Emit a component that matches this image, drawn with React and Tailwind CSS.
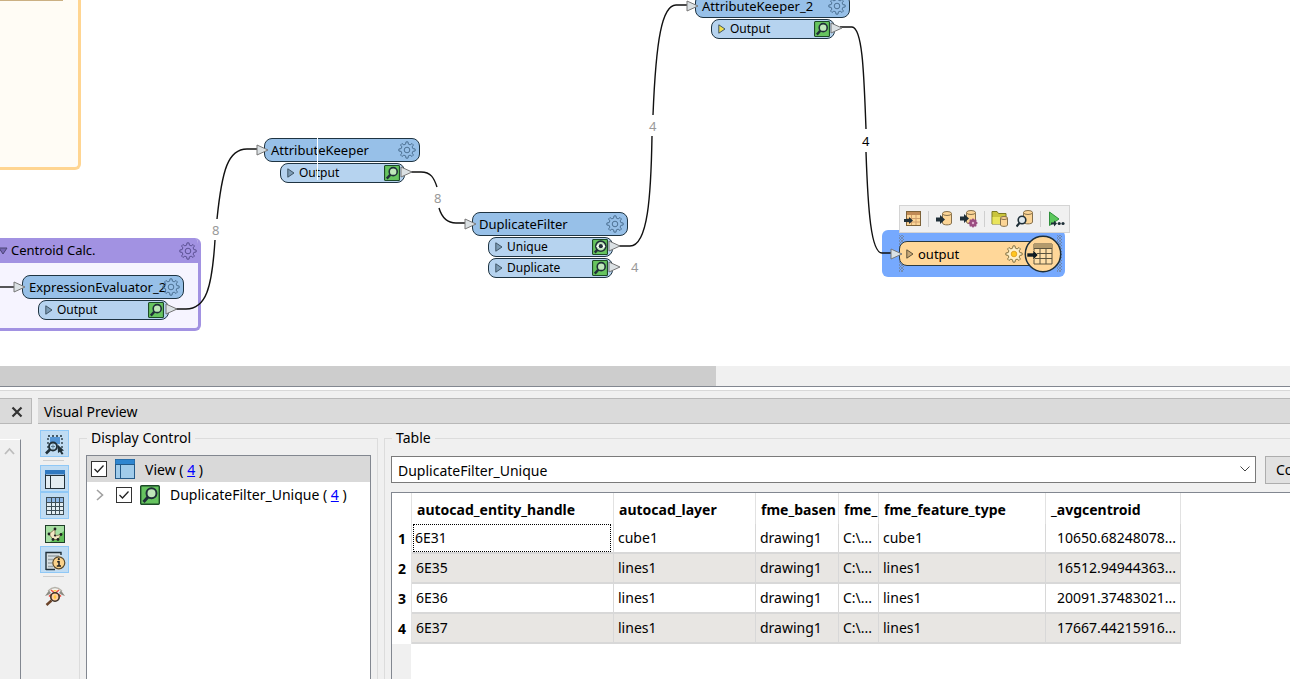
import React, { useState } from 'react';

const INK = '#1f2f38';

const gearPath = (c, outer, inner, teeth = 8) => {
  const step = (Math.PI * 2) / teeth;
  const pt = (a, r) => `${(c + r * Math.cos(a)).toFixed(2)} ${(c + r * Math.sin(a)).toFixed(2)}`;
  let d = '';
  for (let i = 0; i < teeth; i++) {
    const a = i * step - Math.PI / 2;
    d += `${i === 0 ? 'M' : 'L'}${pt(a - step * 0.3, inner)} L${pt(a - step * 0.16, outer)} L${pt(a + step * 0.16, outer)} L${pt(a + step * 0.3, inner)} `;
  }
  return d + 'Z';
};

const Gear = ({ fill = 'none', stroke = '#45698a', dot = 'none' }) => (
  <svg width="18" height="18" viewBox="0 0 18 18" className="shrink-0">
    <path d={gearPath(9, 8.2, 6)} fill={fill} stroke={stroke} strokeWidth="0.9" strokeLinejoin="round" />
    <circle cx="9" cy="9" r="2.8" fill={dot} stroke={dot === 'none' ? stroke : '#e0a020'} strokeWidth="0.9" />
  </svg>
);

const Inspect = ({ eye, className = 'size-4' }) => (
  <svg viewBox="0 0 20 20" className={`shrink-0 ${className}`}>
    <rect x="0.7" y="0.7" width="18.6" height="18.6" rx="1" fill="#66c45f" stroke="#1c4a28" strokeWidth="1.4" />
    <path d="M3.5 17 L8 12" stroke={INK} strokeWidth="3" />
    {eye ? (
      <>
        <circle cx="11" cy="9" r="6.3" fill="#bfe8ba" stroke={INK} strokeWidth="2" />
        <path d="M5 9 Q11 3.5 17 9 Q11 14.5 5 9Z" fill="#fff" />
        <circle cx="11" cy="9" r="2.6" fill={INK} />
      </>
    ) : (
      <circle cx="11.5" cy="8.3" r="5" fill="#bfe8ba" stroke={INK} strokeWidth="2" />
    )}
  </svg>
);

const Expand = ({ fill = '#7d9cb5', stroke = '#3f5566' }) => (
  <svg width="8" height="10" viewBox="0 0 8 10" className="shrink-0">
    <path d="M0.8 0.8 L7 5 L0.8 9.2Z" fill={fill} stroke={stroke} />
  </svg>
);

const Port = ({ label, eye, arrow }) => (
  <div className="flex h-5 items-center rounded-lg border border-[#1f3442] bg-[#b6d3ef] pr-1 pl-[6px]">
    <Expand fill={arrow} />
    <span className="ml-1 flex-1 text-xs leading-4">{label}</span>
    <Inspect eye={eye} />
  </div>
);

const Transformer = ({ name, ports, className }) => (
  <div className={`absolute ${className}`}>
    <div className="flex h-6 items-center justify-between rounded-lg border border-[#1f3442] bg-[#97c0e8] pr-[3px] pl-[6px]">
      <span className="w-0 text-[13px] leading-none whitespace-nowrap">{name}</span>
      <Gear />
    </div>
    <div className="mr-[15px] ml-4 flex flex-col gap-px pt-px">
      {ports.map((port) => (
        <Port key={port.label} {...port} />
      ))}
    </div>
  </div>
);

const wires = [
  'M0 287 H15',
  'M175 309 H186 C206 309 212 288 215 240',
  'M217 219 C222 170 228 149 247 149 H257',
  'M411 172 H421 C431 172 434 178 437 187',
  'M439 208 C442 218 447 223 456 223 H466',
  'M619 246 H630 C648 246 651 195 652 136',
  'M653 115 C656 40 662 5 676 5 H688',
  'M840 27 H852 C863 28 864 78 866 129',
  'M866 152 C868 210 871 253 882 253 H892',
];

const arrows = [
  [14, 287], [166, 309], [257, 150], [401, 172], [465, 224],
  [609, 246], [609, 267], [687, 6], [831, 28],
];

const counts = [
  { n: 8, className: 'left-[212px] top-[221px] text-[#999]' },
  { n: 8, className: 'left-[434px] top-[189px] text-[#999]' },
  { n: 4, className: 'left-[649px] top-[117px] text-[#999]' },
  { n: 4, className: 'left-[631px] top-[258px] text-[#999]' },
  { n: 4, className: 'left-[862px] top-[132px] text-black' },
];

const Drum = ({ x = 0, y = 0 }) => (
  <g transform={`translate(${x} ${y})`} fill="#fcd596" stroke="#85704c">
    <path d="M0.5 2.5 V12 C0.5 14.5 9.5 14.5 9.5 12 V2.5" />
    <ellipse cx="5" cy="2.5" rx="4.5" ry="2" />
  </g>
);

const BlackArrow = ({ x = 0, y = 0 }) => (
  <path transform={`translate(${x} ${y})`} d="M0 2.5 H5 V0 L10 4.5 L5 9 V6.5 H0Z" fill={INK} />
);

const ToolIcon = ({ label, children }) => (
  <button type="button" aria-label={label} className="shrink-0">
    <svg width="18" height="18" viewBox="0 0 18 18">{children}</svg>
  </button>
);

const ToolDivider = () => <span className="h-4 w-px bg-[#cfcfcf]" />;

const MiniToolbar = () => (
  <div className="absolute top-[205px] left-[899px] flex h-7 w-[171px] items-center justify-between border border-[#d4d4d4] bg-[#f0f0f0] px-1">
    <ToolIcon label="View table">
      <rect x="2.5" y="1.5" width="14" height="14" fill="#fcd596" stroke="#7d6238" />
      <path d="M3 2 H16 V5 H3Z" fill="#c08a55" />
      <path d="M3 8.5 H16 M3 12 H16 M7.5 5 V15 M12 5 V15" stroke="#cf9f6c" />
      <path d="M0 9 H5 V7 L9 10.5 L5 14 V12 H0Z" fill={INK} />
    </ToolIcon>
    <ToolDivider />
    <ToolIcon label="Write to database">
      <Drum x={6} y={1} />
      <BlackArrow x={-1} y={5} />
    </ToolIcon>
    <ToolIcon label="Writer settings">
      <Drum x={6} y={0} />
      <BlackArrow x={-1} y={4} />
      <path d={gearPath(13, 4.6, 3.8)} fill="#9a4c80" />
      <circle cx="13" cy="13" r="1.2" fill="#e0b0d0" />
    </ToolIcon>
    <ToolDivider />
    <ToolIcon label="Open folder">
      <path d="M1 14 V1.5 H6 L7.5 3.5 H15 V14Z" fill="#c9c43c" stroke="#7c7a22" />
      <path d="M1.5 7 H13 V14 H1.5Z" fill="#e9e45c" />
      <path d="M9.5 8 V15 C9.5 16.8 16.5 16.8 16.5 15 V8" fill="#fcd596" stroke="#85704c" />
      <ellipse cx="13" cy="8" rx="3.5" ry="1.5" fill="#fcd596" stroke="#85704c" />
    </ToolIcon>
    <ToolIcon label="Inspect data">
      <Drum x={7} y={0} />
      <circle cx="6" cy="10" r="3.8" fill="#dfe8ee" stroke={INK} strokeWidth="1.6" />
      <path d="M3.5 13 L0.5 16.5" stroke={INK} strokeWidth="2.2" />
    </ToolIcon>
    <ToolDivider />
    <ToolIcon label="Run to this">
      <path d="M2.5 2 L12 9 L2.5 15.5Z" fill="#5cc85c" stroke="#2f8f3c" />
      <path d="M4 12.5 H7 V10.5 L10 13.5 L7 16.5 V14.5 H4Z" fill={INK} />
      <circle cx="12.2" cy="13.5" r="1.6" fill={INK} />
      <circle cx="16" cy="13.5" r="1.6" fill={INK} />
    </ToolIcon>
  </div>
);

const Hatch = ({ className }) => (
  <svg width="5" height="37" className={`absolute ${className}`}>
    <defs>
      <pattern id="hatch" width="3" height="3" patternUnits="userSpaceOnUse">
        <path d="M0 0 L3 3 M3 0 L0 3" stroke="#6f8097" strokeWidth="0.7" />
      </pattern>
    </defs>
    <rect width="5" height="37" fill="url(#hatch)" />
  </svg>
);

const OutputWriter = () => (
  <>
    <div className="absolute top-[230px] left-[882px] h-[47px] w-[183px] rounded-md bg-[#76a9fe]" />
    <Hatch className="top-[235px] left-[899px]" />
    <Hatch className="top-[235px] left-[1057px]" />
    <div className="absolute top-[241px] left-[899px] flex h-[25px] w-[148px] items-center rounded-lg border border-[#2c3a40] bg-[#ffd799] pt-px pl-[6px]">
      <Expand fill="#c9a877" stroke="#5f5138" />
      <span className="ml-1 w-[87px] text-[13px] leading-4">output</span>
      <Gear fill="#fff0c8" stroke="#7a6a3a" dot="#ffc61e" />
    </div>
    <svg width="38" height="38" viewBox="0 0 38 38" className="absolute top-[235px] left-[1024px]">
      <circle cx="19" cy="19" r="17.7" fill="#ffd799" stroke={INK} strokeWidth="1.5" />
      <path d="M10 9 H28 V29 H10Z" fill="#ffdfa8" stroke="#5c543f" />
      <path d="M10 9 H28 V13 H10Z" fill="#b39a6c" />
      <path d="M10 13.5 H28 M10 18.5 H28 M10 23.5 H28 M16 13 V29 M22 13 V29" stroke="#5c543f" />
      <path d="M3 18 H9 V15 L14 20 L9 25 V22 H3Z" fill="#111d24" stroke="#ffd799" strokeWidth="0.6" />
    </svg>
  </>
);

const Canvas = () => (
  <div className="relative h-[366px] w-full shrink-0 overflow-hidden bg-white">
    {/* Bookmarks */}
    <div className="absolute top-0 left-0 h-[170px] w-[81px] rounded-br-md border-r-3 border-b-3 border-[#ffd591] bg-[#fffcf5]">
      <div className="h-px w-[63px] bg-[#cbb083]" />
    </div>
    <div className="absolute top-[238px] left-0 h-[93px] w-[201px] overflow-hidden rounded-r-md border-r-3 border-b-3 border-[#a292e2] bg-[#f6f4ff]">
      <div className="flex h-[25px] items-center bg-[#a292e2]">
        <svg width="8" height="8" viewBox="0 0 8 8">
          <path d="M-1 1 H7 L3 7Z" fill="#7768b5" stroke="#4b4475" />
        </svg>
        <span className="ml-[3px] flex-1 pt-px text-[13px]">Centroid Calc.</span>
        <span className="mr-px">
          <Gear stroke="#54498a" />
        </span>
      </div>
    </div>

    <Transformer name="ExpressionEvaluator_2" ports={[{ label: 'Output' }]} className="left-[22px] top-[275px] w-[162px]" />
    <Transformer name="AttributeKeeper" ports={[{ label: 'Output' }]} className="left-[264px] top-[138px] w-[156px]" />
    <Transformer
      name="DuplicateFilter"
      ports={[{ label: 'Unique', eye: true }, { label: 'Duplicate' }]}
      className="left-[472px] top-[212px] w-[156px]"
    />
    <Transformer name="AttributeKeeper_2" ports={[{ label: 'Output', arrow: '#f2e04a' }]} className="left-[695px] top-[-6px] w-[155px]" />
    <div className="absolute top-[137px] left-[317px] h-[43px] w-px bg-white" />

    <OutputWriter />

    <svg width="1290" height="366" className="pointer-events-none absolute top-0 left-0">
      {wires.map((d) => (
        <path key={d} d={d} fill="none" stroke="#111" strokeWidth="1.4" />
      ))}
      {[...arrows, [891, 254]].map(([x, y]) => (
        <path key={`${x}-${y}`} d={`M${x} ${y - 5} L${x + 11} ${y} L${x} ${y + 5}Z`} fill="#dbe1e4" stroke="#777" />
      ))}
    </svg>

    {counts.map(({ n, className }) => (
      <span key={className} className={`absolute text-[13px] leading-[18px] ${className}`}>{n}</span>
    ))}

    <MiniToolbar />
  </div>
);

const Check = ({ label }) => {
  const [checked, setChecked] = useState(true);
  return (
    <label className="relative block size-4 shrink-0">
      <input
        type="checkbox"
        aria-label={label}
        checked={checked}
        onChange={() => setChecked(!checked)}
        className="block size-4 appearance-none border border-[#333] bg-white"
      />
      {checked && (
        <svg viewBox="0 0 16 16" className="pointer-events-none absolute inset-0">
          <path d="M3.5 8 L6.5 11 L12.5 4.5" fill="none" stroke="#222" strokeWidth="1.3" />
        </svg>
      )}
    </label>
  );
};

const SideButton = ({ label, active, children }) => (
  <button
    type="button"
    aria-label={label}
    className={`flex h-[27px] w-[29px] items-center justify-center border ${active ? 'border-[#90c8f6] bg-[#c0dcf3]' : 'border-transparent'}`}
  >
    <svg width="22" height="22" viewBox="0 0 22 22">{children}</svg>
  </button>
);

const SideToolbar = () => (
  <div className="flex w-[41px] shrink-0 flex-col items-start pt-[6px] pl-[2px]">
    <SideButton label="Select features" active>
      <rect x="6" y="4" width="10" height="7" fill="#5596d6" />
      <rect x="4" y="3" width="14" height="12" fill="none" stroke={INK} strokeDasharray="2 2" strokeWidth="1.3" />
      <circle cx="9" cy="13.5" r="4" fill="#b8d8ef" stroke={INK} strokeWidth="1.8" />
      <path d="M6 16.5 L2 20.5" stroke={INK} strokeWidth="2.6" />
      <path d="M7 13.5 H11 M9 11.5 V15.5" stroke="#5d7d92" />
      <path d="M13.5 11.5 L20 17.5 L17.8 18 L19.5 21 L17.5 21.5 L16 18.8 L14 20Z" fill={INK} />
    </SideButton>
    <span className="mt-[3px] mb-1 ml-[3px] h-px w-[21px] bg-[#cfcfcf]" />
    <SideButton label="Display control" active>
      <rect x="1.5" y="2.5" width="19" height="18" fill="#e3edf2" stroke="#24323a" />
      <rect x="1" y="2" width="20" height="4.5" fill="#3079c0" />
      <path d="M1 7.5 H21 M6.5 7 V21" stroke="#24323a" />
    </SideButton>
    <SideButton label="Table view" active>
      <rect x="2" y="2" width="18" height="18" fill="#e3edf2" />
      <rect x="2" y="2" width="18" height="5" fill="#8fb8e6" />
      <path d="M2.5 2 V20 M7.5 2 V20 M11.5 2 V20 M15.5 2 V20 M19.5 2 V20 M2 2.5 H20 M2 7.5 H20 M2 11.5 H20 M2 15.5 H20 M2 19.5 H20" stroke="#3d4d56" />
    </SideButton>
    <SideButton label="Graphics view">
      <rect x="1.5" y="3.5" width="19" height="17" fill="#a6dfa2" stroke="#1f3d28" />
      <path d="M20 9 V20 H6Z" fill="#62c05a" />
      <path d="M11 7 L5 12 L9 17.5 H14 L17 12.5 L11 14Z" fill="#f2e6c4" stroke="#7d6a44" strokeWidth="0.8" />
      <g fill="#222">
        <circle cx="11" cy="7" r="1.4" /><circle cx="5" cy="12" r="1.4" /><circle cx="9" cy="17.5" r="1.4" />
        <circle cx="14" cy="17.5" r="1.4" /><circle cx="17" cy="12.5" r="1.4" /><circle cx="11" cy="13.5" r="1.1" />
      </g>
    </SideButton>
    <SideButton label="Feature information" active>
      <path d="M2 3 H17 V21 H2Z" fill="#d7dfe2" />
      <path d="M2 21 V3.5 H17 V6 M2 20.5 H11" fill="none" stroke={INK} strokeWidth="1.4" />
      <path d="M4 7 H15 M4 10.5 H9 M4 14 H8 M4 17.5 H9" stroke="#99a4a8" strokeWidth="1.4" />
      <circle cx="14.8" cy="13.8" r="6" fill="#fbd28a" stroke="#5a4a2c" strokeWidth="1.2" />
      <path d="M13.2 12.7 H15 V17 M12.8 17 H17" fill="none" stroke="#222" strokeWidth="1.5" />
      <circle cx="14.8" cy="10.2" r="1.1" fill="#222" />
    </SideButton>
    <span className="my-[3px] ml-[3px] h-px w-[21px] bg-[#cfcfcf]" />
    <div className="pt-[2px]">
      <SideButton label="Inspect in viewer">
        <path d="M4 6 Q11 -1 18 6" fill="#f3f3ee" stroke="#b4b2aa" strokeWidth="1.2" />
        <path d="M1 11 L5 5.5 L7 8 L4 10Z M21 11 L17 5.5 L15 8 L18 10Z" fill="#8d8b82" />
        <path d="M7 5 L10 7.5 M15 5 L12 7.5 M5 11.5 L7 9.5 M17 11.5 L15 9.5" stroke="#ee4b3f" strokeWidth="1.5" />
        <path d="M9 5 H13 L11 7Z" fill="#ffd24a" />
        <circle cx="11" cy="12" r="4.2" fill="#ffd0a0" stroke="#3c2f26" strokeWidth="1.6" />
        <path d="M11 9.5 L12.5 12 L11 14.5 L9.5 12Z" fill="#ffc83c" />
        <path d="M7.5 15.5 L2.5 20" stroke="#6b4328" strokeWidth="2.4" />
      </SideButton>
    </div>
  </div>
);

const columns = [
  { name: 'autocad_entity_handle', width: 'w-[202px]' },
  { name: 'autocad_layer', width: 'w-[142px]' },
  { name: 'fme_basen', width: 'w-[83px]' },
  { name: 'fme_', width: 'w-[40px]' },
  { name: 'fme_feature_type', width: 'w-[167px]' },
  { name: '_avgcentroid', width: 'w-[135px]' },
];

const rows = [
  ['6E31', 'cube1', 'drawing1', 'C:\\...', 'cube1', '10650.68248078...'],
  ['6E35', 'lines1', 'drawing1', 'C:\\...', 'lines1', '16512.94944363...'],
  ['6E36', 'lines1', 'drawing1', 'C:\\...', 'lines1', '20091.37483021...'],
  ['6E37', 'lines1', 'drawing1', 'C:\\...', 'lines1', '17667.44215916...'],
];

const FeatureTable = () => (
  <table className="w-[789px] table-fixed border-separate border-spacing-0 text-left">
    <thead>
      <tr className="h-[31px]">
        <th className="w-5 border-r border-[#e2e2e2]" />
        {columns.map((col) => (
          <th
            key={col.name}
            scope="col"
            className={`overflow-hidden border-r border-[#e2e2e2] p-0 pt-[2px] pl-[5px] text-sm font-bold whitespace-nowrap ${col.width}`}
          >
            {col.name}
          </th>
        ))}
      </tr>
    </thead>
    <tbody>
      {rows.map((row, i) => (
        <tr key={row[0]} className="h-[30px]">
          <th scope="row" className="border-r border-[#e2e2e2] p-0 pr-[5px] text-right text-sm leading-5 font-bold">{i + 1}</th>
          {row.map((cell, j) => (
            <td
              key={j}
              className={`border-r border-b-2 border-[#d8d8d8] p-0 text-sm whitespace-nowrap ${i % 2 ? 'bg-[#e8e6e3]' : 'bg-white'}`}
            >
              <div
                className={`flex h-7 items-center ${i === 0 && j === 0 ? 'mr-[2px] ml-px border border-dotted border-black pl-px' : 'px-1'} ${j === 5 ? 'justify-end' : ''}`}
              >
                {cell}
              </div>
            </td>
          ))}
        </tr>
      ))}
    </tbody>
  </table>
);

const DisplayControl = () => (
  <fieldset className="mt-1 flex w-[299px] shrink-0 flex-col border border-b-0 border-[#dcdcdc] px-[6px]">
    <legend className="ml-px px-1 text-sm leading-5">Display Control</legend>
    <div className="mt-[7px] flex-1 border border-b-0 border-[#828790] bg-white">
      <div className="flex h-[26px] items-center bg-[#d9d9d9] pl-1">
        <Check label="View" />
        <svg width="20" height="20" viewBox="0 0 20 20" className="ml-2">
          <rect x="0.5" y="0.5" width="19" height="19" fill="#a0cbea" stroke="#245a88" />
          <rect x="0.5" y="0.5" width="19" height="4.5" fill="#2f86d0" />
          <path d="M0 5.5 H20 M5.5 5 V20" stroke="#245a88" />
        </svg>
        <span className="ml-[10px] pt-px text-sm">View ( <a href="#view" className="text-[#00f] underline">4</a> )</span>
      </div>
      <div className="flex h-[25px] items-center pl-2">
        <svg width="10" height="12" viewBox="0 0 10 12">
          <path d="M2 1 L7.5 6 L2 11" fill="none" stroke="#a0a0a0" strokeWidth="1.6" />
        </svg>
        <span className="ml-[11px]">
          <Check label="DuplicateFilter_Unique" />
        </span>
        <Inspect className="ml-2 size-5" />
        <span className="ml-[10px] text-sm whitespace-nowrap">
          DuplicateFilter_Unique ( <a href="#unique" className="text-[#00f] underline">4</a> )
        </span>
      </div>
    </div>
  </fieldset>
);

const TablePanel = () => (
  <fieldset className="mt-1 ml-[6px] flex min-w-0 flex-1 flex-col border border-r-0 border-b-0 border-[#dcdcdc] pl-[6px]">
    <legend className="ml-px px-1 text-sm leading-5">Table</legend>
    <div className="mt-2 flex items-start">
      <div className="relative min-w-0 flex-1">
        <select
          aria-label="Table source"
          className="block h-[27px] w-full appearance-none border border-[#7a7a7a] bg-white pt-[2px] pl-[6px] text-sm"
        >
          <option>DuplicateFilter_Unique</option>
        </select>
        <svg width="10" height="6" viewBox="0 0 10 6" className="pointer-events-none absolute top-[10px] right-[6px]">
          <path d="M0.5 0.5 L5 5 L9.5 0.5" fill="none" stroke="#444" />
        </svg>
      </div>
      <button type="button" className="ml-[9px] h-[28px] w-[25px] overflow-hidden border border-r-0 border-[#adadad] bg-[#e1e1e1] pl-[10px] text-left text-sm whitespace-nowrap">
        Co
      </button>
    </div>
    <div className="mt-2 flex flex-1 flex-col border-t border-l border-[#828790] bg-white">
      <FeatureTable />
      <div className="w-[19px] flex-1 bg-[#f0f0f0]" />
    </div>
  </fieldset>
);

const App = () => {
  return (
    <div
      className="flex h-screen flex-col overflow-hidden bg-[#f0f0f0] text-black"
      style={{ fontFamily: '"Noto Sans", "Open Sans", sans-serif' }}
    >
      <Canvas />

      {/* Horizontal scrollbar */}
      <div className="h-5 shrink-0 bg-[#f0f0f0]">
        <div className="h-full w-[716px] bg-[#cdcdcd]" />
      </div>
      <div className="h-[5px] shrink-0 border-t border-b border-t-[#828790] border-b-[#d8d8d8] bg-white" />

      <div className="flex min-h-0 flex-1 pt-[7px]">
        {/* Docked panel on the left */}
        <div className="flex w-8 shrink-0 flex-col">
          <div className="flex h-[26px] shrink-0 items-center justify-end border border-l-0 border-[#b8b8b8] bg-[#dadada] pt-[2px] pr-2">
            <button type="button" aria-label="Close">
              <svg width="12" height="12" viewBox="0 0 12 12" className="block">
                <path d="M1.5 1.5 L10.5 10.5 M10.5 1.5 L1.5 10.5" stroke="#333" strokeWidth="2.2" />
              </svg>
            </button>
          </div>
          <div className="mt-[15px] w-[21px] flex-1 border-t border-r border-t-white border-r-[#828790] pt-[7px] pl-1">
            <svg width="11" height="8" viewBox="0 0 11 8">
              <path d="M1 7 L5.5 2 L10 7" fill="none" stroke="#bdbdbd" strokeWidth="1.8" />
            </svg>
          </div>
        </div>

        {/* Visual Preview */}
        <div className="ml-[6px] flex min-w-0 flex-1 flex-col">
          <div className="flex h-[26px] shrink-0 items-center border-t border-b border-[#b8b8b8] bg-[#dadada] pt-[2px] pl-[6px] text-sm">
            Visual Preview
          </div>
          <div className="flex min-h-0 flex-1">
            <SideToolbar />
            <DisplayControl />
            <TablePanel />
          </div>
        </div>
      </div>
    </div>
  );
};

export default App;
